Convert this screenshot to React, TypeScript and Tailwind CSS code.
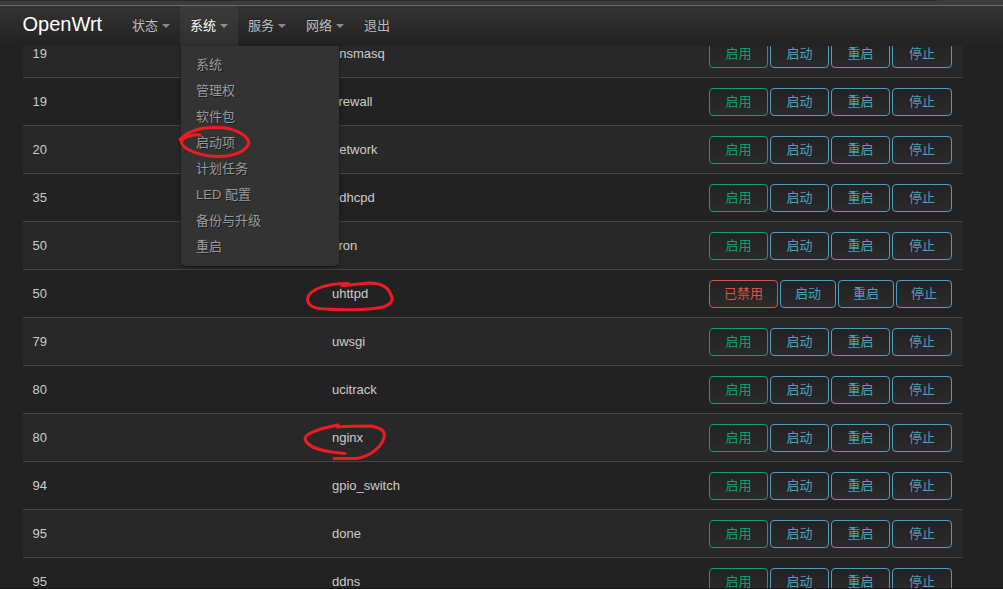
type Service = { order: number; name: string; enabled: boolean };

const services: Service[] = [
  { order: 19, name: "dnsmasq", enabled: true },
  { order: 19, name: "firewall", enabled: true },
  { order: 20, name: "network", enabled: true },
  { order: 35, name: "odhcpd", enabled: true },
  { order: 50, name: "cron", enabled: true },
  { order: 50, name: "uhttpd", enabled: false },
  { order: 79, name: "uwsgi", enabled: true },
  { order: 80, name: "ucitrack", enabled: true },
  { order: 80, name: "nginx", enabled: true },
  { order: 94, name: "gpio_switch", enabled: true },
  { order: 95, name: "done", enabled: true },
  { order: 95, name: "ddns", enabled: true },
];

const menuItems = ["系统", "管理权", "软件包", "启动项", "计划任务", "LED 配置", "备份与升级", "重启"];

function Caret() {
  return (
    <svg className="ml-1 h-1 w-2 shrink-0" viewBox="0 0 8 4" fill="#8c8c8c">
      <path d="M0 0h8L4 4z" />
    </svg>
  );
}

function NavItem({ label, caret = true, active = false }: { label: string; caret?: boolean; active?: boolean }) {
  return (
    <li
      className={`flex h-full items-center px-2.5 text-shadow-[0_-1px_0_rgba(0,0,0,0.25)] ${
        active ? "bg-linear-to-b from-[#3b3b3b] to-[#303030] text-white" : "text-[#bfbfbf]"
      }`}
    >
      <span>{label}</span>
      {caret && <Caret />}
    </li>
  );
}

function SystemMenu() {
  return (
    <ul className="absolute top-full left-px w-[158px] rounded-b-[5px] bg-[#333] pt-1.5 pb-1.5 text-[#999] shadow-[0_1px_4px_rgba(0,0,0,0.5)]">
      {menuItems.map((item) => (
        <li key={item} className="h-[26px] pl-[15px] leading-[26px] text-shadow-[1px_1px_0_rgba(0,0,0,0.45)]">
          {item}
        </li>
      ))}
    </ul>
  );
}

function Button({ label, tone, width }: { label: string; tone: string; width: string }) {
  return (
    <button
      className={`flex h-7 items-center justify-center rounded-[4px] border bg-linear-to-b from-[#222] to-[#2b2b2b] pb-px ${tone} ${width}`}
    >
      {label}
    </button>
  );
}

const blue = "border-[#4a9fc4] text-[#4a9fc4]";

function ServiceRow({ service, index }: { service: Service; index: number }) {
  const width = service.enabled ? "w-[59px]" : "w-14";
  return (
    <div
      className={`flex h-12 shrink-0 items-center border-b border-[#444] text-[#ccc] ${
        index % 2 === 0 ? "bg-[#282828]" : "bg-[#222]"
      }`}
    >
      <div className="w-[309px] pl-[9.5px]">{service.order}</div>
      <div className="w-[377px]">{service.name}</div>
      <div className="flex gap-0.5 pt-px">
        {service.enabled ? (
          <Button label="启用" tone="border-[#0ba36b] text-[#0ba36b]" width={width} />
        ) : (
          <Button label="已禁用" tone="border-[#d9534f] text-[#d9534f]" width="w-[69px]" />
        )}
        <Button label="启动" tone={blue} width={width} />
        <Button label="重启" tone={blue} width={width} />
        <Button label="停止" tone={blue} width={service.enabled ? "w-[60px]" : "w-14"} />
      </div>
    </div>
  );
}

function Marks() {
  return (
    <svg
      className="pointer-events-none absolute inset-0 z-20 h-full w-full"
      viewBox="0 0 1003 589"
      fill="none"
      stroke="#ed1c24"
      strokeWidth="3"
      strokeLinecap="round"
      strokeLinejoin="round"
    >
      <path d="M200 135C194 134 186 137 180 139.500C188 131 201 127 216 127.500C232 127 247 134 249 143C247 150 236 156.500 218 156.500C202 156.500 184 150 181.500 143Q181 139 185 138" />
      <path d="M342 285.500L348 283.500C331 283 309 288 307.500 299C308 306 315 309 326 309C344 310.500 371 310 383 307C392 304 394 299 391 295C388 286 380 283 369 283L344 285.500" />
      <path d="M338 425C324 428 305 432 305 439C308 449 325 452 345 453.500M337 427C350 426 362 426 371 426C380 428 386 430 384 438C380 450 367 457 356 458.500L334 458.500" />
    </svg>
  );
}

export default function App() {
  return (
    <div className="relative flex h-[589px] w-[1003px] flex-col overflow-hidden bg-[#222] font-['Liberation_Sans','Noto_Sans_CJK_SC',sans-serif] text-[13px] leading-[18px]">
      <div className="h-1.5 shrink-0 border-b border-[#6a6a6a] bg-[#3c3c3c]">
        <div className="h-px w-[937px] bg-[#292929]" />
      </div>
      <header className="relative z-10 flex h-10 shrink-0 bg-linear-to-b from-[#333] to-[#222] pl-[22.5px]">
        <a className="w-[99.5px] pt-1.5 text-xl leading-6 text-white">OpenWrt</a>
        <nav>
          <ul className="flex h-full">
            <NavItem label="状态" />
            <li className="relative h-full">
              <ul className="h-full">
                <NavItem label="系统" active />
              </ul>
              <SystemMenu />
            </li>
            <NavItem label="服务" />
            <NavItem label="网络" />
            <NavItem label="退出" caret={false} />
          </ul>
        </nav>
      </header>
      <main className="min-h-0 flex-1 overflow-hidden pl-[23px]">
        <div className="-mt-4 flex w-[940px] flex-col">
          {services.map((service, index) => (
            <ServiceRow key={service.name} service={service} index={index} />
          ))}
        </div>
      </main>
      <div className="h-px shrink-0 bg-[#151515]" />
      <Marks />
    </div>
  );
}
